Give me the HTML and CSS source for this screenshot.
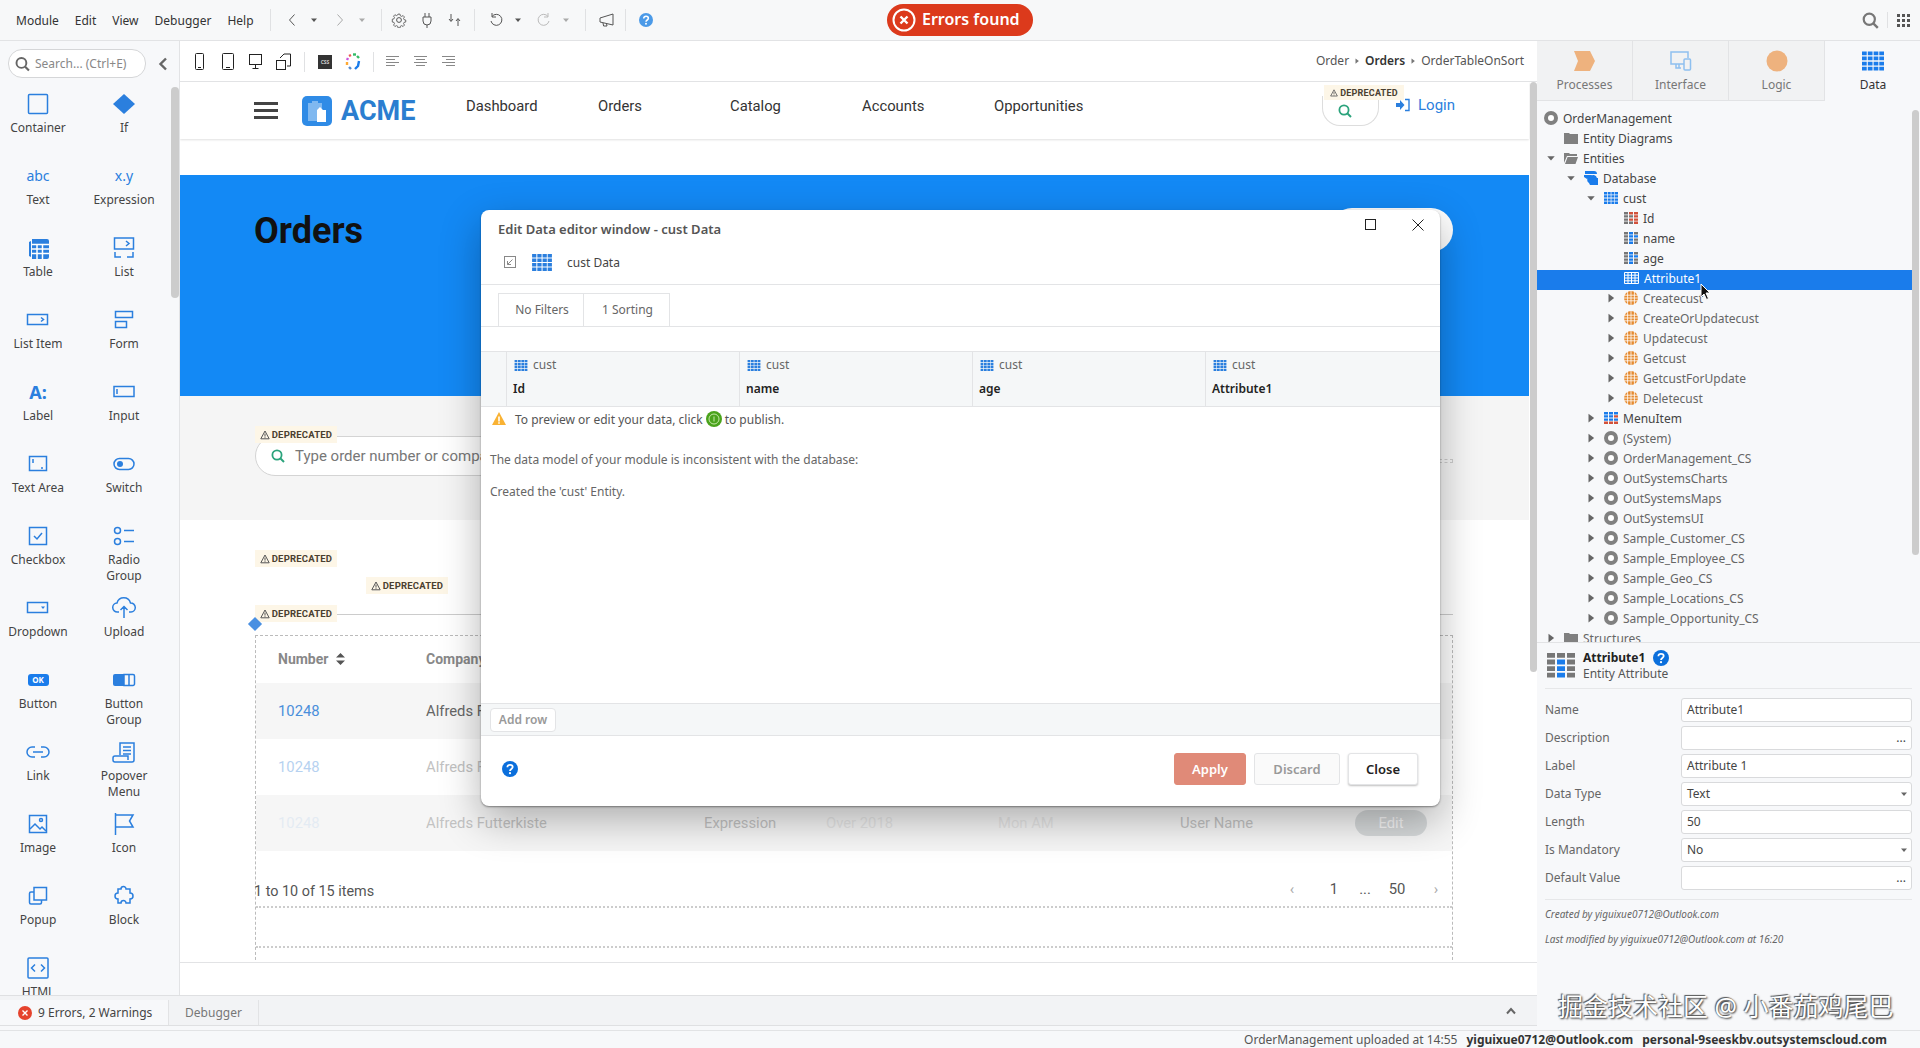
FILE: index.html
```html
<!DOCTYPE html>
<html lang="en">
  <head>
    <meta charset="UTF-8" />
    <title>Service Studio - OrderManagement</title>
    <link rel="stylesheet" href="styles.css">
  </head>
  <body>
    <svg class="defs" width="0" height="0">
      <symbol id="i-grid" viewBox="0 0 14 12">
        <path fill="currentColor" d="M0 0h3v2.400H0zM3.700 0h3v2.400h-3zM7.400 0h3v2.400h-3zM11 0h3v2.400h-3zM0 3.200h3v2.400H0zM3.700 3.200h3v2.400h-3zM7.400 3.200h3v2.400h-3zM11 3.200h3v2.400h-3zM0 6.400h3v2.400H0zM3.700 6.400h3v2.400h-3zM7.400 6.400h3v2.400h-3zM11 6.400h3v2.400h-3zM0 9.600h3V12H0zM3.700 9.600h3V12h-3zM7.400 9.600h3V12h-3zM11 9.600h3V12h-3z"/>
      </symbol>
      <symbol id="i-attr-blue" viewBox="0 0 14 12">
        <path fill="#777" d="M0 0h4v2.400H0zM0 3.200h4v2.400H0zM0 6.400h4v2.400H0zM0 9.600h4V12H0zM10 0h4v2.400h-4zM10 6.400h4v2.400h-4zM10 9.600h4V12h-4z"/>
        <path fill="#1a7ceb" d="M5 0h4v2.400H5zM5 3.200h4v2.400H5zM5 6.400h4v2.400H5zM5 9.600h4V12H5zM10 3.200h4v2.400h-4z"/>
      </symbol>
      <symbol id="i-attr-red" viewBox="0 0 14 12">
        <path fill="#777" d="M0 0h4v2.400H0zM0 3.200h4v2.400H0zM0 6.400h4v2.400H0zM0 9.600h4V12H0zM5 3.200h4v2.400H5zM5 9.600h4V12H5z"/>
        <path fill="#d2513a" d="M5 0h4v2.400H5zM5 6.400h4v2.400H5zM10 0h4v2.400h-4zM10 3.200h4v2.400h-4zM10 6.400h4v2.400h-4zM10 9.600h4V12h-4z"/>
      </symbol>
      <symbol id="i-menuitem" viewBox="0 0 14 12">
        <path fill="#1a7ceb" d="M0 0h4v2.400H0zM5 0h4v2.400H5zM10 0h4v2.400h-4zM0 3.200h4v2.400H0zM5 3.200h4v2.400H5zM0 6.400h4v2.400H0zM5 6.400h4v2.400H5zM10 6.400h4v2.400h-4z"/>
        <path fill="#d2513a" d="M10 3.200h4v2.400h-4zM0 9.600h4V12H0zM5 9.600h4V12H5zM10 9.600h4V12h-4z"/>
      </symbol>
      <symbol id="i-action" viewBox="0 0 14 14">
        <circle cx="7" cy="7" r="7" fill="#e58a30"/>
        <path stroke="#fff" stroke-width=".8" fill="none" d="M0 4.200h14M0 7h14M0 9.800h14M3.600 0v14M7 0v14M10.400 0v14"/>
      </symbol>
      <symbol id="i-module" viewBox="0 0 14 14">
        <circle cx="7" cy="7" r="5" fill="#fff" stroke="#808080" stroke-width="4"/>
      </symbol>
      <symbol id="i-folder" viewBox="0 0 14 12">
        <path fill="#808080" d="M0 1h5l1 1h8v10H0z"/>
      </symbol>
      <symbol id="i-folder-open" viewBox="0 0 14 12">
        <path fill="#808080" d="M0 1h5l1 1h7v2H3L0 11zM3.600 5H14l-2.500 7H1z"/>
      </symbol>
      <symbol id="i-caret" viewBox="0 0 8 8"><path fill="currentColor" d="M1 2.500h6L4 6z"/></symbol>
      <symbol id="i-arrow" viewBox="0 0 8 8"><path fill="currentColor" d="M2 .5v7L6.500 4z"/></symbol>
      <symbol id="i-deprecated" viewBox="0 0 10 10">
        <path fill="none" stroke="#555" d="M5 1 .8 8.800h8.400z"/><path stroke="#555" d="M5 3.600v3M5 7.300v.8"/>
      </symbol>
      <symbol id="i-search" viewBox="0 0 14 14">
        <circle cx="6" cy="6" r="4.600" fill="none" stroke="currentColor" stroke-width="1.800"/>
        <path stroke="currentColor" stroke-width="2" d="m9.500 9.500 3.500 3.500"/>
      </symbol>
      <symbol id="i-help" viewBox="0 0 16 16">
        <circle cx="8" cy="8" r="8" fill="currentColor"/>
        <path fill="none" stroke="#fff" stroke-width="1.800" d="M5.400 6.200C5.400 4.700 6.500 3.800 8 3.800s2.700.9 2.700 2.300c0 1.900-2.700 1.900-2.700 3.900"/>
        <circle cx="8" cy="12.200" r="1.100" fill="#fff"/>
      </symbol>
    </svg>

    <header class="topbar">
      <nav class="menu">
        <span>Module</span><span>Edit</span><span>View</span><span>Debugger</span><span>Help</span>
      </nav>
      <i class="sep"></i>
      <div class="tools">
        <span class="tool"><svg width="8" height="14" viewBox="0 0 8 14"><path d="M6.500 1.500 1.500 7l5 5.500" fill="none" stroke="#555"/></svg></span>
        <span class="tool"><svg class="caret" width="8" height="8"><use href="#i-caret"/></svg></span>
        <span class="tool tool-gap"><svg width="8" height="14" viewBox="0 0 8 14"><path d="m1.500 1.500 5 5.500-5 5.500" fill="none" stroke="#aaa"/></svg></span>
        <span class="tool"><svg class="caret muted" width="8" height="8"><use href="#i-caret"/></svg></span>
      </div>
      <i class="sep"></i>
      <div class="tools tools-wide">
        <span class="tool"><svg width="16" height="16" viewBox="0 0 16 16" fill="none" stroke="#555"><circle cx="8" cy="8" r="2.400"/><path d="M6.800 1h2.400l.4 2 1.500.7 1.800-1 1.600 1.700-1.100 1.700.6 1.500 2 .4v2.400l-2 .4-.6 1.500 1.100 1.700-1.600 1.700-1.800-1-1.500.7-.4 2H6.800l-.4-2-1.500-.7-1.800 1-1.600-1.700 1.100-1.700-.6-1.500-2-.4V7l2-.4.600-1.500-1.100-1.700 1.600-1.700 1.800 1 1.500-.7z" transform="translate(1.300 1.300) scale(.84)"/></svg></span>
        <span class="tool"><svg width="12" height="16" viewBox="0 0 12 16" fill="none" stroke="#555"><path d="M4 1v4M8 1v4M2 5h8v4a4 4 0 0 1-8 0zM6 13v3"/></svg></span>
        <span class="tool"><svg width="16" height="14" viewBox="0 0 16 14" fill="none" stroke="#555"><path d="M4 1v7M2 6l2 2.500L6 6M11 13V6M9 8l2-2.500L13 8"/></svg></span>
      </div>
      <i class="sep"></i>
      <div class="tools">
        <span class="tool"><svg width="14" height="16" viewBox="0 0 14 16" fill="none" stroke="#555"><path d="M3 4.500A5.500 5.500 0 1 1 2 9M3 1v4h4"/></svg></span>
        <span class="tool"><svg class="caret" width="8" height="8"><use href="#i-caret"/></svg></span>
        <span class="tool tool-gap"><svg width="14" height="16" viewBox="0 0 14 16" fill="none" stroke="#bbb"><path d="M11 4.500A5.500 5.500 0 1 0 12 9M11 1v4H7"/></svg></span>
        <span class="tool"><svg class="caret muted" width="8" height="8"><use href="#i-caret"/></svg></span>
      </div>
      <i class="sep"></i>
      <span class="tool"><svg width="16" height="14" viewBox="0 0 16 14" fill="none" stroke="#555"><path d="M1 5v4l13 3V1zM4 10l.6 3h3.400l-.4-2"/></svg></span>
      <i class="sep"></i>
      <span class="tool"><svg class="help" width="14" height="16"><use href="#i-help"/></svg></span>
      <div class="errors-pill">
        <svg width="24" height="24" viewBox="0 0 24 24" fill="none" stroke="#fff"><circle cx="12" cy="12" r="10.500" stroke-width="2"/><path stroke-width="2.400" d="m8.500 8.500 7 7m0-7-7 7"/></svg>
        <span>Errors found</span>
      </div>
      <div class="top-right">
        <svg class="top-search" width="17" height="17"><use href="#i-search"/></svg>
        <i class="sep sep-small"></i>
        <svg width="13" height="13" viewBox="0 0 13 13" fill="#555"><path d="M0 0h3v3H0zM5 0h3v3H5zM10 0h3v3h-3zM0 5h3v3H0zM5 5h3v3H5zM10 5h3v3h-3zM0 10h3v3H0zM5 10h3v3H5zM10 10h3v3h-3z"/></svg>
      </div>
    </header>

    <div class="workspace">
      <div class="main-col">
        <div class="main-top">
          <aside class="toolbox">
            <div class="toolbox-search">
              <div class="search-box">
                <svg width="15" height="16"><use href="#i-search"/></svg>
                <span>Search... (Ctrl+E)</span>
              </div>
              <svg class="collapse" width="10" height="14" viewBox="0 0 10 14"><path d="M8 1.500 2.500 7 8 12.500" fill="none" stroke="#666" stroke-width="2.400"/></svg>
            </div>
            <div class="widgets">
              <div class="widget"><svg width="24" height="30" viewBox="0 0 24 30"><rect x="2.500" y="5.500" width="19" height="19" rx="1"/></svg><span>Container</span></div>
              <div class="widget"><svg width="24" height="30" viewBox="0 0 24 30"><path class="solid" d="m12 5 11 10-11 10L1 15z"/></svg><span>If</span></div>
              <div class="widget"><b class="glyph">abc</b><span>Text</span></div>
              <div class="widget"><b class="glyph">x.y</b><span>Expression</span></div>
              <div class="widget"><svg width="24" height="24" viewBox="0 0 24 24"><path class="solid" d="M6 3h15a2 2 0 0 1 2 2v16a2 2 0 0 1-2 2H6zM3 6l2-1v16l-2-1z"/><path stroke="#fff" d="M6 8.500h17M6 13h17M6 17.500h17M11 8v15M16.500 8v15"/></svg><span>Table</span></div>
              <div class="widget"><svg width="24" height="24" viewBox="0 0 24 24"><rect x="2.500" y="2" width="19" height="11"/><path d="m14 5 3 2.500-3 2.500M3 16v5h6M21 16v5h-6"/></svg><span>List</span></div>
              <div class="widget"><svg width="24" height="14" viewBox="0 0 24 14"><rect x="1.500" y="1.500" width="20" height="10"/><path d="m15 4.500 2.500 2-2.500 2"/></svg><span>List Item</span></div>
              <div class="widget"><svg width="20" height="20" viewBox="0 0 20 20"><rect x="1.500" y="1.500" width="17" height="6"/><rect x="1.500" y="11.500" width="11" height="6"/></svg><span>Form</span></div>
              <div class="widget"><b class="glyph glyph-big">A:</b><span>Label</span></div>
              <div class="widget"><svg width="22" height="14" viewBox="0 0 22 14"><rect x="1" y="1.500" width="20" height="10"/><path d="M4 4v5"/></svg><span>Input</span></div>
              <div class="widget"><svg width="20" height="18" viewBox="0 0 20 18"><rect x="1.500" y="1.500" width="17" height="14"/><path d="M5 4v4M15 13h-2"/></svg><span>Text Area</span></div>
              <div class="widget"><svg width="22" height="14" viewBox="0 0 22 14"><rect x="1" y="1.500" width="20" height="11" rx="5.500"/><circle class="solid" cx="7" cy="7" r="3"/></svg><span>Switch</span></div>
              <div class="widget"><svg width="20" height="20" viewBox="0 0 20 20"><rect x="1.500" y="1.500" width="17" height="17"/><path d="m6 10 3 3 5-6"/></svg><span>Checkbox</span></div>
              <div class="widget"><svg width="22" height="20" viewBox="0 0 22 20"><circle cx="4.500" cy="4.500" r="3"/><circle cx="4.500" cy="15.500" r="3"/><path d="M11 4.500h10M11 15.500h10"/></svg><span>Radio<br>Group</span></div>
              <div class="widget"><svg width="24" height="14" viewBox="0 0 24 14"><rect x="1.500" y="1.500" width="20" height="10"/><path class="solid" d="M15 5.500h4L17 8z"/></svg><span>Dropdown</span></div>
              <div class="widget"><svg width="24" height="22" viewBox="0 0 24 22"><path d="M7 15H5.500a4.500 4.500 0 0 1-.5-9 7 7 0 0 1 13.500 0 4.500 4.500 0 0 1 .5 9H17M12 21V10M8.500 13 12 9.500l3.500 3.500"/></svg><span>Upload</span></div>
              <div class="widget"><b class="ok-icon">OK</b><span>Button</span></div>
              <div class="widget"><svg width="24" height="14" viewBox="0 0 24 14"><path class="solid" d="M3 1h9v12H3a2 2 0 0 1-2-2V3a2 2 0 0 1 2-2z"/><path d="M12 1.500h9a1.500 1.500 0 0 1 1.500 1.500v8a1.500 1.500 0 0 1-1.500 1.500h-9zM17 1.500v11"/></svg><span>Button<br>Group</span></div>
              <div class="widget"><svg width="24" height="14" viewBox="0 0 24 14"><path d="M9 2H6a5 5 0 0 0 0 10h3M15 2h3a5 5 0 0 1 0 10h-3M7 7h10"/></svg><span>Link</span></div>
              <div class="widget"><svg width="24" height="22" viewBox="0 0 24 22"><path d="M8 14V2h14v17a2 2 0 0 1-2 2H3a2 2 0 0 1-2-2v-2a2 2 0 0 1 2-2h13v4M11 6h8M11 9.500h8M11 13h8"/></svg><span>Popover<br>Menu</span></div>
              <div class="widget"><svg width="20" height="20" viewBox="0 0 20 20"><rect x="1.500" y="1.500" width="17" height="17"/><path d="m2 15 5-5 5 5 2-2 4 4"/><circle cx="13" cy="6" r="1.500"/></svg><span>Image</span></div>
              <div class="widget"><svg width="22" height="24" viewBox="0 0 22 24"><path d="M2.500 1v22M3 3h17l-3.500 6 3.500 6H3"/></svg><span>Icon</span></div>
              <div class="widget"><svg width="20" height="20" viewBox="0 0 20 20"><rect x="6" y="1.500" width="12.500" height="12.500"/><path d="M6 6H3a1.500 1.500 0 0 0-1.500 1.500v9A1.500 1.500 0 0 0 3 18h9a1.500 1.500 0 0 0 1.500-1.500V14"/></svg><span>Popup</span></div>
              <div class="widget"><svg width="22" height="20" viewBox="0 0 22 20"><path d="M5 3h3a2.500 2.500 0 0 1 5 0h4v4a2.500 2.500 0 0 1 0 6v4h-4a2.500 2.500 0 0 0-5 0H5v-4a2.500 2.500 0 0 1 0-6z"/></svg><span>Block</span></div>
              <div class="widget"><svg width="22" height="22" viewBox="0 0 22 22"><rect x="1" y="1" width="20" height="20" rx="1"/><path d="M8 7.500 4.500 11 8 14.500M14 7.500l3.500 3.500-3.500 3.500"/></svg><span>HTML</span></div>
            </div>
            <i class="toolbox-scroll"></i>
          </aside>

          <main class="editor">
            <div class="canvas-toolbar">
              <div class="device-tools">
                <svg width="10" height="18" viewBox="0 0 10 18" fill="none" stroke="#222"><rect x=".5" y=".5" width="8" height="16" rx="1"/><path d="M3 14.500h3"/></svg>
                <svg width="12" height="18" viewBox="0 0 12 18" fill="none" stroke="#222"><rect x=".5" y=".5" width="11" height="16" rx="1"/><path d="M4 14.500h4"/></svg>
                <svg width="14" height="18" viewBox="0 0 14 18" fill="none" stroke="#222"><rect x=".5" y="1.500" width="12" height="10"/><path d="M6.500 11.500v4M3.500 15.500h6"/></svg>
                <svg width="16" height="18" viewBox="0 0 16 18" fill="none" stroke="#222"><rect x=".5" y="7.500" width="9" height="9"/><path d="M4 5 8 1h6.500v12H11"/></svg>
                <i class="tool-sep"></i>
                <b class="css-badge">CSS</b>
                <svg width="16" height="18" viewBox="0 0 16 18" fill="none" stroke-width="2.400"><path stroke="#e55" d="M4 3 6 2"/><path stroke="#3b6" d="M8 1.500h3"/><path stroke="#3b6" d="m12 3 2 2"/><path stroke="#1a7ceb" d="m14 8-1 5-3 3"/><path stroke="#58c" d="M6 16 4 14"/><path stroke="#fa3" d="M2 12V9"/><path stroke="#c5d" d="m2 7 1-2"/></svg>
                <i class="tool-sep"></i>
                <svg width="14" height="12" viewBox="0 0 14 12" stroke="#888"><path d="M0 .5h13M0 3.500h9M0 6.500h13M0 9.500h9"/></svg>
                <svg width="14" height="12" viewBox="0 0 14 12" stroke="#888"><path d="M0 .5h13M2 3.500h9M0 6.500h13M2 9.500h9"/></svg>
                <svg width="14" height="12" viewBox="0 0 14 12" stroke="#888"><path d="M0 .5h13M4 3.500h9M0 6.500h13M4 9.500h9"/></svg>
              </div>
              <div class="breadcrumb">
                <span>Order</span><svg width="6" height="8"><use href="#i-arrow"/></svg><b>Orders</b><svg width="6" height="8"><use href="#i-arrow"/></svg><span>OrderTableOnSort</span>
              </div>
            </div>

            <div class="canvas">
              <div class="page">
                <div class="app-header">
                  <div class="hamburger"><i></i><i></i><i></i></div>
                  <svg class="logo" width="30" height="30" viewBox="0 0 30 30"><rect width="30" height="30" rx="5" fill="#2f8be6"/><path fill="#7fb8f0" d="M6 7h4V5h6v2h4v18H6z"/><path fill="#fff" d="m15 14 3-3 3 3h3v12h-9z"/></svg>
                  <span class="brand">ACME</span>
                  <nav class="app-nav">
                    <span>Dashboard</span><span>Orders</span><span>Catalog</span><span>Accounts</span><span>Opportunities</span>
                  </nav>
                  <div class="header-search">
                    <span class="deprecated deprecated-small"><svg width="8" height="8"><use href="#i-deprecated"/></svg>DEPRECATED</span>
                    <svg width="14" height="14"><use href="#i-search"/></svg>
                  </div>
                  <div class="login">
                    <svg width="14" height="14" viewBox="0 0 14 14"><path fill="#2b7fde" d="M0 5h4V2l4.500 5L4 12V9H0z"/><path fill="none" stroke="#2b7fde" stroke-width="1.400" d="M9 1.500h4v11H9"/></svg>
                    <span>Login</span>
                  </div>
                </div>

                <section class="hero">
                  <h1>Orders</h1>
                  <i class="hero-button"></i>
                </section>

                <section class="filters">
                  <span class="deprecated filter-badge"><svg width="10" height="10"><use href="#i-deprecated"/></svg>DEPRECATED</span>
                  <div class="order-search">
                    <svg width="14" height="14"><use href="#i-search"/></svg>
                    <span>Type order number or company name</span>
                  </div>
                  <i class="filter-handle"></i>
                </section>

                <section class="results">
                  <span class="deprecated badge-a"><svg width="10" height="10"><use href="#i-deprecated"/></svg>DEPRECATED</span>
                  <span class="deprecated badge-b"><svg width="10" height="10"><use href="#i-deprecated"/></svg>DEPRECATED</span>
                  <span class="deprecated badge-c"><svg width="10" height="10"><use href="#i-deprecated"/></svg>DEPRECATED</span>
                  <i class="results-line"></i>
                  <i class="anchor"></i>
                  <div class="table-box">
                    <div class="order-row order-head">
                      <span class="sortable">Number <svg width="9" height="12" viewBox="0 0 9 12" fill="#555"><path d="M4.500 0 9 4.500H0zM4.500 12 0 7.500h9z"/></svg></span>
                      <span>Company</span>
                    </div>
                    <div class="order-row row-even"><a>10248</a><span>Alfreds Futterkiste</span></div>
                    <div class="order-row row-fade"><a>10248</a><span>Alfreds Futterkiste</span></div>
                    <div class="order-row row-even row-faint">
                      <a>10248</a><span>Alfreds Futterkiste</span><span>Expression</span><span>Over 2018</span><span>Mon AM</span><span>User Name</span><b class="row-btn">Edit</b>
                    </div>
                    <div class="pager">
                      <span class="pager-count">1 to 10 of 15 items</span>
                      <div class="pager-links">
                        <span class="muted-link">‹</span><span>1</span><span>...</span><span>50</span><span class="muted-link">›</span>
                      </div>
                    </div>
                    <div class="dotted-slot"></div>
                  </div>
                </section>
              </div>
              <i class="canvas-scroll"></i>
            </div>
            <div class="canvas-foot"></div>

            <div class="dialog">
              <div class="dialog-head">
                <div class="dialog-title">Edit Data editor window - cust Data</div>
                <svg class="win-max" width="12" height="12" viewBox="0 0 12 12"><rect x=".5" y=".5" width="10" height="10" fill="none" stroke="#222"/></svg>
                <svg class="win-close" width="12" height="12" viewBox="0 0 12 12"><path d="m.5.5 11 11m0-11-11 11" stroke="#222"/></svg>
                <div class="dialog-sub">
                  <svg width="12" height="12" viewBox="0 0 12 12" fill="none" stroke="#888"><rect x=".5" y=".5" width="11" height="11"/><path d="M8.500 3.500 3.500 8.500M3.500 5v3.500H7"/></svg>
                  <svg class="sub-grid" width="22" height="17"><use href="#i-grid"/></svg>
                  <span>cust Data</span>
                </div>
              </div>
              <div class="dialog-tabs">
                <span>No Filters</span><span>1 Sorting</span>
              </div>
              <div class="data-grid">
                <div class="grid-stub"></div>
                <div class="grid-col"><div class="grid-entity"><svg width="14" height="11"><use href="#i-grid"/></svg>cust</div><b>Id</b></div>
                <div class="grid-col"><div class="grid-entity"><svg width="14" height="11"><use href="#i-grid"/></svg>cust</div><b>name</b></div>
                <div class="grid-col"><div class="grid-entity"><svg width="14" height="11"><use href="#i-grid"/></svg>cust</div><b>age</b></div>
                <div class="grid-col"><div class="grid-entity"><svg width="14" height="11"><use href="#i-grid"/></svg>cust</div><b>Attribute1</b></div>
              </div>
              <div class="dialog-body">
                <div class="publish-note">
                  <svg width="14" height="14" viewBox="0 0 14 14"><path fill="#f9b233" d="M7 0 14 13H0z"/><path stroke="#fff" stroke-width="1.600" d="M7 4.500v5M7 10.300v1.500"/></svg>
                  <span>To preview or edit your data, click</span>
                  <svg width="16" height="16" viewBox="0 0 16 16"><circle cx="8" cy="8" r="8" fill="#4aa31c"/><circle cx="8" cy="8" r="5" fill="none" stroke="#c5e8a8"/><path stroke="#c5e8a8" d="M8 5.500v5"/></svg>
                  <span>to publish.</span>
                </div>
                <p>The data model of your module is inconsistent with the database:</p>
                <p>Created the 'cust' Entity.</p>
              </div>
              <div class="add-row-bar"><span class="add-row">Add row</span></div>
              <div class="dialog-foot">
                <svg class="foot-help" width="16" height="16"><use href="#i-help"/></svg>
                <span class="btn btn-apply">Apply</span>
                <span class="btn btn-discard">Discard</span>
                <span class="btn btn-close">Close</span>
              </div>
            </div>
          </main>
        </div>

        <div class="bottom-tabs">
          <div class="bottom-tab tab-errors">
            <svg width="14" height="14" viewBox="0 0 14 14"><circle cx="7" cy="7" r="7" fill="#e5432d"/><path stroke="#fff" stroke-width="1.400" d="m4.500 4.500 5 5m0-5-5 5"/></svg>
            <span>9 Errors, 2 Warnings</span>
          </div>
          <div class="bottom-tab tab-debugger">Debugger</div>
          <svg class="bottom-toggle" width="10" height="8" viewBox="0 0 10 8"><path d="M1 6.500 5 2l4 4.500" fill="none" stroke="#666" stroke-width="2"/></svg>
        </div>
      </div>

      <aside class="side">
        <div class="side-tabs">
          <div class="side-tab">
            <svg width="22" height="20" viewBox="0 0 22 20"><path fill="#eeb27e" d="M0 0h16l5 10-5 10H0l4-10z"/></svg><span>Processes</span>
          </div>
          <div class="side-tab">
            <svg width="22" height="20" viewBox="0 0 22 20" fill="none" stroke="#8ec0f0" stroke-width="1.500"><path d="M14 13H1V1h17v6M6 13v4h5M9 13v4"/><rect x="14" y="8" width="6.500" height="11" rx="1"/></svg><span>Interface</span>
          </div>
          <div class="side-tab">
            <svg width="22" height="22" viewBox="0 0 22 22"><circle cx="11" cy="11" r="10.500" fill="#eeb27e"/></svg><span>Logic</span>
          </div>
          <div class="side-tab side-tab-active">
            <svg class="data-icon" width="22" height="18"><use href="#i-grid"/></svg><span>Data</span>
          </div>
        </div>

        <div class="tree">
          <div class="node l0 dark"><svg width="14" height="14"><use href="#i-module"/></svg>OrderManagement</div>
          <div class="node l1 dark"><i class="arr"></i><svg width="14" height="12"><use href="#i-folder"/></svg>Entity Diagrams</div>
          <div class="node l1 dark"><i class="arr"><svg width="10" height="10"><use href="#i-caret"/></svg></i><svg width="14" height="12"><use href="#i-folder-open"/></svg>Entities</div>
          <div class="node l2 dark"><i class="arr"><svg width="10" height="10"><use href="#i-caret"/></svg></i><svg width="14" height="14" viewBox="0 0 14 14"><path fill="#1a7ceb" d="M1 0h9a3 3 0 0 1 3 3H1zM0 4l8 0-5 4-3-2zM5 12a3.500 3.500 0 0 1 1-6.500A4 4 0 0 1 13 7a2.500 2.500 0 0 1 0 7H6z"/></svg>Database</div>
          <div class="node l3 dark"><i class="arr"><svg width="10" height="10"><use href="#i-caret"/></svg></i><svg class="blue" width="14" height="12"><use href="#i-grid"/></svg>cust</div>
          <div class="node l4 dark"><i class="arr"></i><svg width="14" height="12"><use href="#i-attr-red"/></svg>Id</div>
          <div class="node l4 dark"><i class="arr"></i><svg width="14" height="12"><use href="#i-attr-blue"/></svg>name</div>
          <div class="node l4 dark"><i class="arr"></i><svg width="14" height="12"><use href="#i-attr-blue"/></svg>age</div>
          <div class="node l4 selected"><i class="arr"></i><svg width="15" height="12" viewBox="0 0 15 12" fill="none" stroke="#fff"><path d="M.5.5h14v11H.5zM.5 3.200h14M.5 6h14M.5 8.800h14M4 .5v11M7.500.5v11M11 .5v11"/></svg><span class="node-label">Attribute1</span><svg class="pointer" width="12" height="18" viewBox="0 0 12 18"><path d="M1 1v13l3-3 2.500 5.500 2-1L6 10h4z" fill="#111" stroke="#fff"/></svg></div>
          <div class="node l4"><i class="arr"><svg width="10" height="10"><use href="#i-arrow"/></svg></i><svg width="14" height="14"><use href="#i-action"/></svg>Createcust</div>
          <div class="node l4"><i class="arr"><svg width="10" height="10"><use href="#i-arrow"/></svg></i><svg width="14" height="14"><use href="#i-action"/></svg>CreateOrUpdatecust</div>
          <div class="node l4"><i class="arr"><svg width="10" height="10"><use href="#i-arrow"/></svg></i><svg width="14" height="14"><use href="#i-action"/></svg>Updatecust</div>
          <div class="node l4"><i class="arr"><svg width="10" height="10"><use href="#i-arrow"/></svg></i><svg width="14" height="14"><use href="#i-action"/></svg>Getcust</div>
          <div class="node l4"><i class="arr"><svg width="10" height="10"><use href="#i-arrow"/></svg></i><svg width="14" height="14"><use href="#i-action"/></svg>GetcustForUpdate</div>
          <div class="node l4"><i class="arr"><svg width="10" height="10"><use href="#i-arrow"/></svg></i><svg width="14" height="14"><use href="#i-action"/></svg>Deletecust</div>
          <div class="node l3 dark"><i class="arr"><svg width="10" height="10"><use href="#i-arrow"/></svg></i><svg width="14" height="12"><use href="#i-menuitem"/></svg>MenuItem</div>
          <div class="node l3"><i class="arr"><svg width="10" height="10"><use href="#i-arrow"/></svg></i><svg width="14" height="14"><use href="#i-module"/></svg>(System)</div>
          <div class="node l3"><i class="arr"><svg width="10" height="10"><use href="#i-arrow"/></svg></i><svg width="14" height="14"><use href="#i-module"/></svg>OrderManagement_CS</div>
          <div class="node l3"><i class="arr"><svg width="10" height="10"><use href="#i-arrow"/></svg></i><svg width="14" height="14"><use href="#i-module"/></svg>OutSystemsCharts</div>
          <div class="node l3"><i class="arr"><svg width="10" height="10"><use href="#i-arrow"/></svg></i><svg width="14" height="14"><use href="#i-module"/></svg>OutSystemsMaps</div>
          <div class="node l3"><i class="arr"><svg width="10" height="10"><use href="#i-arrow"/></svg></i><svg width="14" height="14"><use href="#i-module"/></svg>OutSystemsUI</div>
          <div class="node l3"><i class="arr"><svg width="10" height="10"><use href="#i-arrow"/></svg></i><svg width="14" height="14"><use href="#i-module"/></svg>Sample_Customer_CS</div>
          <div class="node l3"><i class="arr"><svg width="10" height="10"><use href="#i-arrow"/></svg></i><svg width="14" height="14"><use href="#i-module"/></svg>Sample_Employee_CS</div>
          <div class="node l3"><i class="arr"><svg width="10" height="10"><use href="#i-arrow"/></svg></i><svg width="14" height="14"><use href="#i-module"/></svg>Sample_Geo_CS</div>
          <div class="node l3"><i class="arr"><svg width="10" height="10"><use href="#i-arrow"/></svg></i><svg width="14" height="14"><use href="#i-module"/></svg>Sample_Locations_CS</div>
          <div class="node l3"><i class="arr"><svg width="10" height="10"><use href="#i-arrow"/></svg></i><svg width="14" height="14"><use href="#i-module"/></svg>Sample_Opportunity_CS</div>
          <div class="node l1"><i class="arr"><svg width="10" height="10"><use href="#i-arrow"/></svg></i><svg width="14" height="12"><use href="#i-folder"/></svg>Structures</div>
          <i class="tree-scroll"></i>
        </div>

        <div class="props">
          <div class="props-head">
            <svg width="28" height="26" viewBox="0 0 14 13"><path fill="#777" d="M0 0h4v2.400H0zM5 0h4v2.400H5zM10 0h4v2.400h-4zM0 3.300h4v2.400H0zM0 6.600h4v2.400H0zM0 9.900h4v2.400H0zM10 3.300h4v2.400h-4zM10 6.600h4v2.400h-4zM10 9.900h4v2.400h-4z"/><path fill="#1a7ceb" d="M5 3.300h4v2.400H5zM5 6.600h4v2.400H5zM5 9.900h4v2.400H5z"/></svg>
            <div>
              <div class="props-name"><b>Attribute1</b><svg width="16" height="16"><use href="#i-help"/></svg></div>
              <div class="props-kind">Entity Attribute</div>
            </div>
          </div>
          <div class="props-form">
            <label>Name</label><div class="field">Attribute1</div>
            <label>Description</label><div class="field field-more"><span>...</span></div>
            <label>Label</label><div class="field">Attribute 1</div>
            <label>Data Type</label><div class="field field-select">Text<svg width="8" height="8"><use href="#i-caret"/></svg></div>
            <label>Length</label><div class="field">50</div>
            <label>Is Mandatory</label><div class="field field-select">No<svg width="8" height="8"><use href="#i-caret"/></svg></div>
            <label>Default Value</label><div class="field field-more"><span>...</span></div>
          </div>
          <div class="props-meta">
            <p>Created by yiguixue0712@Outlook.com</p>
            <p>Last modified by yiguixue0712@Outlook.com at 16:20</p>
          </div>
        </div>
      </aside>
    </div>

    <footer class="statusbar">
      <span>OrderManagement uploaded at 14:55</span>
      <b>yiguixue0712@Outlook.com</b>
      <b>personal-9seeskbv.outsystemscloud.com</b>
    </footer>

    <div class="watermark">掘金技术社区 @ 小番茄鸡尾巴</div>
  </body>
</html>
```

FILE: styles.css
```css
* {
  box-sizing: border-box;
}

html,
body {
  margin: 0;
  height: 100%;
}

body {
  position: relative;
  width: 1920px;
  height: 1048px;
  overflow: hidden;
  display: flex;
  flex-direction: column;
  font-family: "Noto Sans", sans-serif;
  font-size: 12px;
  color: #444;
  background: #f7f8fa;
}

i {
  font-style: normal;
}

svg {
  flex: none;
  display: block;
}

.defs {
  position: absolute;
}

/* top bar */
.topbar {
  position: relative;
  flex: none;
  height: 41px;
  display: flex;
  align-items: center;
  padding-left: 16px;
  background: #f7f8f9;
  border-bottom: 1px solid #e2e3e5;
}

.menu {
  display: flex;
  gap: 16px;
  color: #333;
}

.sep {
  flex: none;
  width: 1px;
  height: 22px;
  margin: 0 10px 0 16px;
  background: #e0e1e3;
}

.tools {
  display: flex;
}

.tools-wide {
  gap: 6px;
  margin-left: -4px;
}

.tool {
  width: 22px;
  height: 22px;
  display: flex;
  align-items: center;
  justify-content: center;
  flex: none;
}

.tool-gap {
  margin-left: 4px;
}

.topbar .tools + .sep {
  margin-left: 8px;
}

.topbar .tool + .sep {
  margin: 0 9px 0 7px;
}

.caret {
  color: #555;
}

.caret.muted {
  color: #aaa;
}

.help {
  color: #4b9ae8;
}

.errors-pill {
  position: absolute;
  left: 887px;
  top: 4px;
  width: 146px;
  height: 32px;
  display: flex;
  align-items: center;
  gap: 6px;
  padding-left: 5px;
  border-radius: 16px;
  background: #dc3a1c;
  color: #fff;
  font-size: 16px;
  font-weight: 600;
}

.errors-pill span {
  margin-top: -2px;
}

.top-right {
  margin-left: auto;
  display: flex;
  align-items: center;
  padding-right: 10px;
}

.top-search {
  color: #777;
}

.topbar .sep-small {
  margin: 0 9px 0 8px;
  height: 16px;
}

/* main area */
.workspace {
  flex: 1;
  min-height: 0;
  display: flex;
}

.main-col {
  flex: none;
  width: 1537px;
  display: flex;
  flex-direction: column;
}

.main-top {
  flex: none;
  height: 954px;
  display: flex;
}

/* widgets on the left */
.toolbox {
  position: relative;
  flex: none;
  width: 180px;
  height: 954px;
  overflow: hidden;
  background: #f7f8fa;
  border-right: 1px solid #e2e3e5;
}

.toolbox-search {
  height: 47px;
  display: flex;
  align-items: flex-start;
  padding: 8px 0 0 8px;
}

.search-box {
  width: 138px;
  height: 29px;
  display: flex;
  align-items: center;
  gap: 5px;
  padding-left: 6px;
  background: #fff;
  border: 1px solid #d5d6d8;
  border-radius: 14px;
  color: #888;
}

.search-box svg {
  color: #666;
}

.collapse {
  margin: 8px 0 0 12px;
}

.widgets {
  display: grid;
  grid-template-columns: 76px 76px;
  grid-auto-rows: 72px;
  column-gap: 10px;
}

.widget {
  display: flex;
  flex-direction: column;
  align-items: center;
  text-align: center;
  line-height: 16px;
  color: #444;
}

.widget > svg {
  flex: none;
  height: 32px;
  fill: none;
  stroke: #2b7fde;
  stroke-width: 1.5;
}

.widget > svg .solid {
  fill: #2b7fde;
  stroke: none;
}

.glyph {
  flex: none;
  height: 32px;
  line-height: 32px;
  font-size: 14px;
  font-weight: 400;
  color: #2b7fde;
}

.glyph-big {
  font-size: 18px;
  font-weight: 700;
}

.ok-icon {
  flex: none;
  margin: 10px 0;
  width: 21px;
  height: 12px;
  line-height: 12px;
  border-radius: 3px;
  background: #1a7ceb;
  color: #fff;
  font-size: 8px;
}

.toolbox-scroll {
  position: absolute;
  left: 171px;
  top: 46px;
  width: 8px;
  height: 211px;
  border-radius: 4px;
  background: #ccc;
}

/* centre */
.editor {
  position: relative;
  flex: 1;
  min-width: 0;
  display: flex;
  flex-direction: column;
}

.canvas-toolbar {
  flex: none;
  height: 41px;
  display: flex;
  align-items: center;
  justify-content: space-between;
  padding: 0 13px 0 6px;
  background: #fff;
  border-bottom: 1px solid #e2e3e5;
}

.device-tools {
  display: grid;
  grid-template-columns: repeat(4, 28px) 13px 28px 28px 12px repeat(3, 28px);
  justify-items: center;
  align-items: center;
  margin-top: 2px;
}

.tool-sep {
  width: 1px;
  height: 20px;
  background: #e0e1e3;
}

.css-badge {
  width: 14px;
  height: 14px;
  line-height: 14px;
  text-align: center;
  background: #333;
  color: #ccc;
  font-size: 5px;
}

.breadcrumb {
  display: flex;
  align-items: center;
  gap: 5px;
  margin-bottom: 1px;
  color: #555;
  font-size: 12px;
}

.breadcrumb b {
  color: #333;
  font-weight: 600;
}

.breadcrumb svg {
  color: #777;
}

.canvas {
  position: relative;
  flex: none;
  height: 880px;
  overflow: hidden;
  background: #fff;
}

.page {
  width: 1349px;
  font-family: Roboto, sans-serif;
  font-size: 14.800px;
  color: #333;
}

.app-header {
  position: relative;
  height: 57px;
  display: flex;
  align-items: center;
  padding-left: 74px;
  background: #fff;
  box-shadow: 0 1px 2px rgba(0, 0, 0, 0.12);
}

.hamburger {
  width: 24px;
  display: flex;
  flex-direction: column;
  gap: 4px;
}

.hamburger i {
  height: 3px;
  background: #444;
}

.logo {
  margin-left: 24px;
}

.brand {
  margin-left: 9px;
  width: 125px;
  font-size: 27px;
  font-weight: 700;
  color: #2b7ed0;
}

.app-nav {
  display: grid;
  grid-template-columns: repeat(5, 132px);
  margin-bottom: 9px;
}

.header-search {
  position: absolute;
  left: 1142px;
  top: 14px;
  width: 57px;
  height: 30px;
  display: flex;
  align-items: center;
  padding-left: 15px;
  color: #2ba37c;
  border: 1px solid #ddd;
  border-top: 0;
  border-radius: 0 0 18px 18px;
}

.login {
  position: absolute;
  left: 1216px;
  top: 14px;
  display: flex;
  align-items: center;
  gap: 8px;
  color: #2b7fde;
  font-size: 15px;
}

.deprecated {
  position: absolute;
  display: flex;
  align-items: center;
  justify-content: center;
  gap: 2px;
  width: 82px;
  height: 17px;
  background: #fdf6e7;
  color: #4a4030;
  font-size: 9.500px;
  font-weight: 700;
  letter-spacing: 0.2px;
}

.deprecated-small {
  left: 1px;
  top: -11px;
  width: 80px;
  height: 15px;
  font-size: 9px;
  letter-spacing: 0.2px;
}

.hero {
  position: relative;
  height: 221px;
  margin-top: 36px;
  padding: 37px 0 0 74px;
  background: #1389f5;
}

.hero h1 {
  margin: 0;
  font-size: 36px;
  line-height: 38px;
  font-weight: 700;
  color: #111;
}

.hero-button {
  position: absolute;
  right: 76px;
  top: 33px;
  width: 123px;
  height: 44px;
  border-radius: 22px;
  background: #fff;
}

.filters {
  position: relative;
  height: 124px;
  padding: 40px 76px 0 75px;
  background: #f5f5f5;
}

.filter-badge {
  left: 75px;
  top: 30px;
}

.order-search {
  width: 900px;
  height: 40px;
  display: flex;
  align-items: center;
  gap: 10px;
  padding-left: 15px;
  background: #fff;
  border: 1px solid #d4d4d4;
  border-radius: 20px 0 0 20px;
  color: #2ba37c;
}

.order-search span {
  font-size: 15px;
  color: #777;
}

.filter-handle {
  position: absolute;
  right: 76px;
  top: 63px;
  width: 14px;
  height: 4px;
  border: 1px dashed #ccc;
}

.results {
  position: relative;
  padding: 115px 76px 0 75px;
}

.badge-a {
  left: 75px;
  top: 30px;
}

.badge-b {
  left: 186px;
  top: 57px;
}

.badge-c {
  left: 75px;
  top: 85px;
}

.results-line {
  position: absolute;
  left: 157px;
  right: 76px;
  top: 94px;
  height: 1px;
  background: #ccc;
}

.anchor {
  position: absolute;
  left: 70px;
  top: 99px;
  width: 10px;
  height: 10px;
  transform: rotate(45deg);
  background: #4a90e2;
}

.table-box {
  height: 330px;
  border: 1px dashed #bbb;
  border-bottom: 0;
}

.order-row {
  height: 56px;
  display: grid;
  grid-template-columns: 148px 278px 122px 172px 182px 177px 70px;
  align-items: center;
  padding-left: 22px;
  color: #666;
}

.order-row a {
  color: #4a8fdb;
}

.order-head {
  height: 47px;
  padding-bottom: 2px;
  font-weight: 700;
  font-size: 14px;
  color: #888;
}

.sortable {
  display: flex;
  align-items: center;
  gap: 8px;
}

.row-even {
  background: #f6f6f6;
}

.row-fade > * {
  opacity: 0.4;
}

.row-faint > * {
  opacity: 0.1;
}

.row-faint > span:nth-child(2),
.row-faint > span:nth-child(3),
.row-faint > span:nth-child(6) {
  opacity: 0.35;
}

.row-faint > .row-btn {
  opacity: 0.3;
}

.row-btn {
  height: 26px;
  line-height: 26px;
  margin-left: -2px;
  text-align: center;
  border-radius: 13px;
  background: #8d979d;
  color: #fff;
  font-weight: 400;
}

.pager {
  height: 57px;
  display: flex;
  align-items: flex-end;
  justify-content: space-between;
  padding: 0 0 6px 0;
  border-bottom: 2px dotted #ccc;
  color: #555;
}

.pager-count {
  margin-left: -2px;
  font-size: 14.400px;
}

.pager-links {
  display: grid;
  grid-template-columns: 40px 44px 18px 46px 32px;
  justify-items: center;
  margin-bottom: 2px;
}

.muted-link {
  color: #aaa;
}

.dotted-slot {
  height: 40px;
  border-bottom: 2px dotted #ccc;
}

.canvas-scroll {
  position: absolute;
  left: 1350px;
  top: 0;
  width: 7px;
  height: 590px;
  border-radius: 4px;
  background: #ccc;
}

.canvas-foot {
  flex: none;
  height: 33px;
  background: #fff;
  border-top: 1px solid #e2e3e5;
}

/* edit data dialog */
.dialog {
  position: absolute;
  left: 301px;
  top: 169px;
  width: 959px;
  height: 596px;
  display: flex;
  flex-direction: column;
  background: #fff;
  border-radius: 8px;
  box-shadow: 0 14px 40px rgba(0, 0, 0, 0.3), 0 1px 2px rgba(0, 0, 0, 0.4);
}

.dialog-head {
  position: relative;
  flex: none;
  height: 75px;
  padding: 10px 0 0 17px;
  border-bottom: 1px solid #e3e4e6;
}

.dialog-title {
  font-size: 13px;
  font-weight: 600;
  line-height: 18px;
  color: #555;
}

.win-max {
  position: absolute;
  left: 884px;
  top: 9px;
}

.win-close {
  position: absolute;
  left: 931px;
  top: 9px;
}

.dialog-sub {
  display: flex;
  align-items: center;
  margin: 14px 0 0 6px;
  height: 20px;
  color: #444;
}

.sub-grid {
  margin: 0 14px 0 15px;
  color: #2b7fde;
}

.dialog-tabs {
  flex: none;
  height: 42px;
  padding: 8px 0 0 17px;
  display: flex;
  border-bottom: 1px solid #e3e4e6;
}

.dialog-tabs span {
  width: 86px;
  padding-left: 2px;
  line-height: 32px;
  text-align: center;
  color: #666;
  border: 1px solid #e3e4e6;
  border-bottom: 0;
}

.dialog-tabs span + span {
  border-left: 0;
}

.data-grid {
  flex: none;
  height: 56px;
  margin-top: 24px;
  display: grid;
  grid-template-columns: 26px repeat(4, 233px) 1fr;
  background: #f5f7f8;
  border-top: 1px solid #e3e4e6;
  border-bottom: 1px solid #e3e4e6;
}

.grid-stub {
  border-right: 1px solid #e3e4e6;
}

.grid-col {
  padding: 4px 0 0 6px;
  border-right: 1px solid #e3e4e6;
  color: #222;
}

.grid-col:last-child {
  border-right: 0;
}

.grid-col b {
  display: block;
  margin-top: 6px;
  font-weight: 600;
}

.grid-entity {
  display: flex;
  align-items: center;
  gap: 5px;
  line-height: 18px;
  padding-left: 1px;
  color: #666;
}

.grid-entity svg {
  color: #2b7fde;
}

.dialog-body {
  flex: none;
  height: 296px;
  padding: 3px 0 0 9px;
  color: #666;
}

.dialog-body p {
  margin: 0 0 16px;
  line-height: 16px;
}

.dialog-body .publish-note + p {
  margin-top: 24px;
}

.publish-note {
  display: flex;
  align-items: center;
  gap: 3px;
  height: 18px;
  margin-left: 2px;
  color: #555;
}

.publish-note span:first-of-type {
  margin-left: 6px;
}

.add-row-bar {
  flex: none;
  height: 33px;
  display: flex;
  align-items: center;
  padding-left: 9px;
  background: #f5f7f8;
  border-top: 1px solid #e3e4e6;
  border-bottom: 1px solid #e3e4e6;
}

.add-row {
  width: 66px;
  height: 24px;
  line-height: 22px;
  text-align: center;
  color: #999;
  font-weight: 600;
  background: #fff;
  border: 1px solid #e3e4e6;
  border-radius: 4px;
}

.dialog-foot {
  flex: 1;
  display: flex;
  align-items: center;
  gap: 8px;
  padding: 0 22px 5px 21px;
}

.foot-help {
  color: #0b6fdc;
  margin-right: auto;
}

.btn {
  height: 32px;
  line-height: 30px;
  text-align: center;
  font-size: 13px;
  font-weight: 600;
  border-radius: 3px;
  border: 1px solid #e3e4e6;
}

.btn-apply {
  width: 72px;
  color: #fff;
  background: #e08a78;
  border-color: #e08a78;
}

.btn-discard {
  width: 86px;
  color: #999;
  background: #fafafa;
}

.btn-close {
  width: 70px;
  color: #222;
  background: #fff;
  box-shadow: 0 1px 2px rgba(0, 0, 0, 0.25);
}

/* bottom tabs */
.bottom-tabs {
  position: relative;
  flex: none;
  height: 31px;
  display: flex;
  align-items: flex-end;
  background: #f2f3f5;
  border-top: 1px solid #dfe0e2;
  border-bottom: 1px solid #dfe0e2;
}

.bottom-tab {
  height: 25px;
  display: flex;
  align-items: center;
  border-right: 1px solid #e2e3e5;
}

.tab-errors {
  width: 169px;
  gap: 6px;
  padding-left: 18px;
  color: #444;
  background: #f7f8fa;
}

.tab-debugger {
  width: 90px;
  justify-content: center;
  color: #777;
}

.bottom-toggle {
  position: absolute;
  right: 21px;
  top: 11px;
}

/* right panel */
.side {
  flex: none;
  width: 383px;
  display: flex;
  flex-direction: column;
  background: #f7f8fa;
}

.side-tabs {
  flex: none;
  height: 60px;
  display: grid;
  grid-template-columns: repeat(4, 96px);
}

.side-tab {
  display: flex;
  flex-direction: column;
  align-items: center;
  gap: 4px;
  padding-top: 9px;
  height: 60px;
  color: #777;
  background: #f1f2f3;
  border-right: 1px solid #e2e3e5;
  border-bottom: 1px solid #e2e3e5;
}

.side-tab svg {
  height: 22px;
}

.side-tab-active {
  color: #333;
  background: #f7f8fa;
  border: 0;
}

.data-icon {
  color: #1a7ceb;
}

.tree {
  position: relative;
  flex: none;
  height: 542px;
  padding-top: 9px;
  overflow: hidden;
  border-bottom: 1px solid #e2e3e5;
}

.node {
  position: relative;
  height: 20px;
  width: 375px;
  padding-bottom: 4px;
  display: flex;
  align-items: center;
  white-space: nowrap;
  color: #666;
}

.node > svg {
  margin-right: 5px;
}

.node.dark {
  color: #444;
}

.arr {
  flex: none;
  width: 20px;
  display: flex;
  padding-left: 2px;
  color: #666;
}

.l0 {
  padding-left: 7px;
}

.l1 {
  padding-left: 7px;
}

.l2 {
  padding-left: 27px;
}

.l3 {
  padding-left: 47px;
}

.l4 {
  padding-left: 67px;
}

.selected {
  background: #1a7ceb;
  color: #fff;
}

/* mouse pointer from the recording */
.selected .pointer {
  position: absolute;
  left: 163px;
  top: 13px;
  z-index: 2;
}

.blue {
  color: #1a7ceb;
}

.tree-scroll {
  position: absolute;
  left: 375px;
  top: 9px;
  width: 7px;
  height: 445px;
  border-radius: 4px;
  background: #ccc;
}

.props {
  flex: 1;
  padding: 0 8px;
}

.props-head {
  height: 46px;
  display: flex;
  align-items: center;
  gap: 8px;
  padding-left: 2px;
  border-bottom: 1px solid #e6e7e9;
  line-height: 16px;
}

.props-name {
  display: flex;
  align-items: center;
  gap: 8px;
}

.props-name b {
  color: #222;
  font-weight: 700;
}

.props-name svg {
  color: #0b6fdc;
}

.props-kind {
  color: #555;
}

.props-form {
  display: grid;
  grid-template-columns: 136px 231px;
  grid-auto-rows: 24px;
  row-gap: 4px;
  align-items: center;
  padding: 9px 0;
  border-bottom: 1px solid #e6e7e9;
}

.props-form label {
  margin-top: -2px;
  color: #666;
}

.field {
  height: 24px;
  line-height: 22px;
  padding: 0 5px;
  display: flex;
  align-items: center;
  justify-content: space-between;
  background: #fff;
  border: 1px solid #d9dadc;
  border-radius: 3px;
  color: #444;
}

.field-more {
  justify-content: flex-end;
}

.field-select svg {
  color: #666;
  margin-right: -2px;
}

.props-meta {
  padding-top: 7px;
  font-size: 10px;
  font-style: italic;
  color: #666;
}

.props-meta p {
  margin: 0 0 11px;
  line-height: 14px;
}

/* status bar */
.statusbar {
  flex: none;
  height: 18px;
  display: flex;
  justify-content: flex-end;
  gap: 9px;
  padding-right: 33px;
  line-height: 18px;
  background: #f7f8fa;
  border-top: 1px solid #e2e3e5;
  color: #555;
}

.statusbar b {
  color: #333;
  font-weight: 700;
}

.watermark {
  position: absolute;
  left: 1558px;
  top: 988px;
  font-family: "Noto Sans", "Noto Sans CJK SC", sans-serif;
  font-size: 25px;
  line-height: 36px;
  white-space: nowrap;
  color: #fff;
  text-shadow: 1px 1px 2px #333, -1px -1px 1px #555;
}
```
